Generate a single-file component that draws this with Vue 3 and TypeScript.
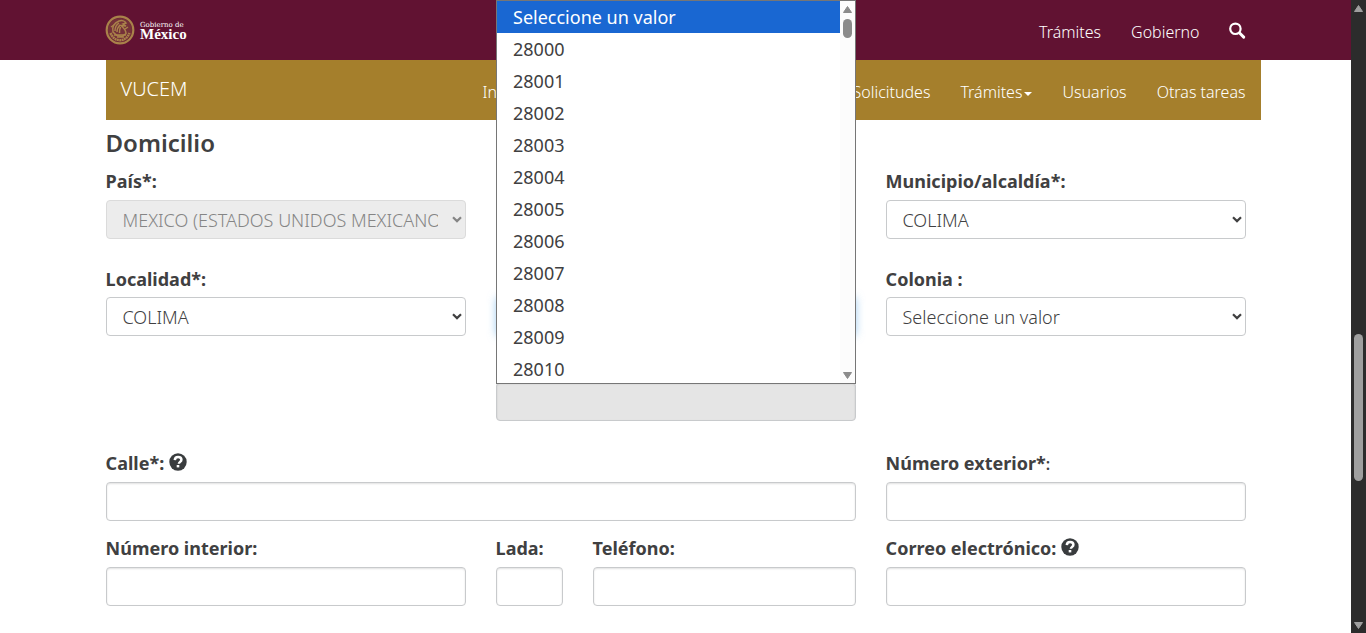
<script setup lang="ts">
interface Field {
  id: string
  label: string
  kind: 'select' | 'input'
  area: string
  value?: string
  disabled?: boolean
  focused?: boolean
  help?: boolean
  lightColon?: boolean
}

const fields: Field[] = [
  { id: 'pais', label: 'País*:', kind: 'select', area: 'a1', value: 'MEXICO (ESTADOS UNIDOS MEXICANOS)', disabled: true },
  { id: 'municipio', label: 'Municipio/alcaldía*:', kind: 'select', area: 'a3', value: 'COLIMA' },
  { id: 'localidad', label: 'Localidad*:', kind: 'select', area: 'b1', value: 'COLIMA' },
  { id: 'postal', label: '', kind: 'select', area: 'b2', value: '', focused: true },
  { id: 'colonia', label: 'Colonia :', kind: 'select', area: 'b3', value: 'Seleccione un valor' },
  { id: 'bloqueado', label: '', kind: 'input', area: 'c2', disabled: true },
  { id: 'calle', label: 'Calle*:', kind: 'input', area: 'd1', help: true },
  { id: 'exterior', label: 'Número exterior*', kind: 'input', area: 'd3', lightColon: true },
  { id: 'interior', label: 'Número interior:', kind: 'input', area: 'e1' },
  { id: 'lada', label: 'Lada:', kind: 'input', area: 'e2' },
  { id: 'telefono', label: 'Teléfono:', kind: 'input', area: 'e3' },
  { id: 'correo', label: 'Correo electrónico:', kind: 'input', area: 'e4', help: true },
]

const options: string[] = [
  'Seleccione un valor',
  ...Array.from({ length: 11 }, (_, i) => String(28000 + i)),
]
</script>

<template>
  <div class="page">
    <div class="content">
      <header class="top">
        <div class="top-inner">
          <div class="logo">
            <svg width="30" height="30" viewBox="0 0 30 30" fill="none" stroke="#a9824a">
              <circle cx="15" cy="15" r="12" fill="#a9824a" stroke="none" opacity=".28" />
              <circle cx="15" cy="15" r="13.3" stroke-width="2.200" />
              <path d="M5.5 18c2 5 5.5 7.200 9.500 7.200s7.500-2.200 9.500-7.200" stroke-width="2.400" stroke-dasharray="1.900 .5" />
              <path d="M8 17c-1-5 1-9 6-11 3-1 6 0 7 2l-3 1 3 2-5-.5c2 2 5 4 5 8l-4 3-5-1zM10 16c0-3 1-6 4-8M12 17c0-3 1-5 3-7M14.500 18c0-3 0-4 1-6" stroke-width="1.500" />
              <path d="M9 20h12M12 22h7M20 14l3-2M6 12l3-2" stroke-width="1.500" />
            </svg>
            <div class="logo-text">
              <span class="logo-small">Gobierno de</span>
              <span class="logo-big">México</span>
            </div>
          </div>
          <nav class="top-links">
            <a>Trámites</a>
            <a>Gobierno</a>
            <svg class="search" width="17" height="17" viewBox="0 0 17 17" fill="none" stroke="#fff">
              <circle cx="6.400" cy="6.800" r="5.200" stroke-width="2.200" />
              <path d="M10.600 11l4.100 4.100" stroke-width="2.900" stroke-linecap="round" />
            </svg>
          </nav>
        </div>
      </header>

      <div class="subnav">
        <span class="brand">VUCEM</span>
        <a class="first">Inicio</a>
        <nav class="sub-links">
          <a>Solicitudes</a>
          <a>Trámites<i class="caret"></i></a>
          <a>Usuarios</a>
          <a>Otras tareas</a>
        </nav>
      </div>

      <main class="form">
        <h4>Domicilio</h4>
        <div class="grid">
          <div v-for="f in fields" :key="f.id" class="field" :class="f.area">
            <label>
              {{ f.label }}<span v-if="f.lightColon" class="light-colon">:</span>
              <svg v-if="f.help" class="help" width="18" height="18" viewBox="0 0 18 18">
                <circle cx="9" cy="9" r="8.700" fill="#393c3e" />
                <path d="M5.800 7.100C5.900 4.900 7.200 3.900 9.100 3.900c1.900 0 3.300 1.100 3.300 2.800 0 2.200-2.500 2.100-2.500 4.100" fill="none" stroke="#fff" stroke-width="2.500" />
                <rect x="7.700" y="12" width="2.600" height="2.400" fill="#fff" />
              </svg>
            </label>
            <div class="control" :class="[f.kind, { disabled: f.disabled, focused: f.focused }]">
              <span v-if="f.value" class="value">{{ f.value }}</span>
              <svg v-if="f.kind === 'select'" class="arrow" width="10" height="7" viewBox="0 0 10 7">
                <path d="M1 1.200l4 3.900 4-3.900" fill="none" stroke="currentColor" stroke-width="2.200" />
              </svg>
            </div>
          </div>
        </div>
      </main>

      <div class="popup">
        <ul>
          <li v-for="(o, i) in options" :key="o" :class="{ active: i === 0 }">{{ o }}</li>
        </ul>
        <div class="popup-bar">
          <svg width="9" height="7" viewBox="0 0 9 7"><path d="M4.500 .5L8.500 6.500H.5z" fill="#8b8b8b" stroke="#8b8b8b" stroke-linejoin="round" /></svg>
          <div class="popup-thumb"></div>
          <svg class="down" width="9" height="7" viewBox="0 0 9 7"><path d="M4.500 6.500L8.500 .5H.5z" fill="#8b8b8b" stroke="#8b8b8b" stroke-linejoin="round" /></svg>
        </div>
      </div>
    </div>

    <div class="scrollbar">
      <svg width="9" height="7" viewBox="0 0 9 7"><path d="M4.500 .5L8.500 6.500H.5z" fill="#9f9f9f" stroke="#9f9f9f" stroke-linejoin="round" /></svg>
      <div class="thumb"></div>
      <svg class="down" width="9" height="7" viewBox="0 0 9 7"><path d="M4.500 6.500L8.500 .5H.5z" fill="#9f9f9f" stroke="#9f9f9f" stroke-linejoin="round" /></svg>
    </div>
  </div>
</template>

<style>
body {
  margin: 0;
  overflow: hidden;
}
</style>

<style scoped>
.page {
  display: flex;
  width: 1366px;
  height: 633px;
  overflow: hidden;
  background: #fff;
  color: #404041;
  font-family: "Noto Sans", sans-serif;
  font-size: 18px;
  font-weight: 300;
}
.page *,
.page {
  box-sizing: border-box;
}
.content {
  position: relative;
  flex: 1;
}
.top {
  height: 60px;
  background: #611232;
}
.top-inner {
  display: flex;
  justify-content: space-between;
  width: 1140px;
  height: 60px;
  margin-left: 106px;
  align-items: center;
}
.logo {
  display: flex;
  align-items: center;
  gap: 5px;
  margin-left: -1px;
  color: #fff;
}
.logo-text {
  display: flex;
  flex-direction: column;
  font-family: "Liberation Serif", serif;
}
.logo-small {
  font-family: "DejaVu Serif", serif;
  font-size: 7px;
  line-height: 8px;
  font-weight: 400;
}
.logo-big {
  font-size: 15px;
  line-height: 11px;
  font-weight: 700;
}
.top-links {
  display: flex;
  align-items: center;
  gap: 30px;
  color: #fff;
  font-size: 16px;
  line-height: 24px;
  padding-top: 4px;
}
.search {
  margin-top: -3px;
  margin-left: -0.5px;
}
.subnav {
  display: flex;
  width: 1155px;
  height: 60px;
  margin-left: 106px;
  padding: 0 15.5px 0 14.5px;
  background: #a57f2c;
  color: #fff;
  font-size: 16px;
  line-height: 64px;
}
.brand {
  width: 362px;
  font-size: 20px;
  line-height: 58px;
}
.sub-links {
  display: flex;
  gap: 30px;
  margin-left: auto;
}
.caret {
  display: inline-block;
  margin-left: 2px;
  vertical-align: middle;
  border: 4px solid transparent;
  border-top-color: #fff;
  border-bottom: 0;
}
.form {
  width: 1140px;
  margin-left: 106px;
}
h4 {
  height: 49px;
  margin: 0 0 0 -0.5px;
  font-size: 24px;
  line-height: 46px;
  font-weight: 600;
}
.grid {
  display: grid;
  grid-template-columns: 360px 67px 263px 360px;
  grid-template-rows: 97px 85px 100px 85px 85px;
  column-gap: 30px;
}
.field {
  display: flex;
  flex-direction: column;
}
.a1 { grid-area: 1 / 1; }
.a3 { grid-area: 1 / 4; }
.b1 { grid-area: 2 / 1; }
.b2 { grid-area: 2 / 2 / 3 / 4; }
.b3 { grid-area: 2 / 4; }
.c2 { grid-area: 3 / 2 / 4 / 4; }
.d1 { grid-area: 4 / 1 / 5 / 4; }
.d3 { grid-area: 4 / 4; }
.e1 { grid-area: 5 / 1; }
.e2 { grid-area: 5 / 2; }
.e3 { grid-area: 5 / 3; }
.e4 { grid-area: 5 / 4; }
label {
  height: 31px;
  margin-left: -0.4px;
  line-height: 25px;
  font-weight: 700;
  white-space: nowrap;
}
.b1 label,
.b3 label {
  line-height: 27px;
}
.light-colon {
  font-size: 16px;
  font-weight: 600;
}
.help {
  margin-left: 5px;
  vertical-align: -1px;
}
.control {
  display: flex;
  align-items: center;
  height: 39px;
  padding: 0 3px 0 15.5px;
  border: 1px solid #c8cacc;
  border-radius: 4px;
  background: #fff;
  box-shadow: inset 0 1px 2px rgba(0, 0, 0, 0.12);
}
.select {
  box-shadow: none;
}
.value {
  width: 315px;
  overflow: hidden;
  white-space: nowrap;
}
.arrow {
  margin-left: auto;
}
.disabled {
  background: #e5e5e5;
}
.select.disabled {
  background: #ececec;
  border-color: #dbdbdb;
  color: #858585;
}
.focused {
  border-color: #66afe9;
  box-shadow: 0 0 8px rgba(102, 175, 233, 0.6);
}
.popup {
  position: absolute;
  left: 496px;
  top: 0;
  display: flex;
  width: 360px;
  height: 384px;
  border: 1px solid #767676;
  background: #fff;
}
ul {
  flex: 1;
  margin: 0;
  padding: 0;
  list-style: none;
  overflow: hidden;
}
li {
  height: 32px;
  padding-left: 16px;
  line-height: 32px;
  font-weight: 400;
}
.active {
  background: #1967d2;
  color: #fff;
}
.popup-bar {
  display: flex;
  flex-direction: column;
  align-items: center;
  width: 15px;
  padding: 5px 0 4px;
  background: #fcfcfc;
}
.popup-thumb {
  width: 9px;
  height: 19px;
  margin-top: 6px;
  border-radius: 5px;
  background: #8b8b8b;
}
.down {
  margin-top: auto;
}
.scrollbar {
  display: flex;
  flex-direction: column;
  align-items: center;
  width: 15px;
  padding: 5px 0 4px;
  background: #2c2c2c;
}
.thumb {
  width: 9px;
  height: 147px;
  margin-top: 322px;
  border-radius: 5px;
  background: #9f9f9f;
}
</style>
